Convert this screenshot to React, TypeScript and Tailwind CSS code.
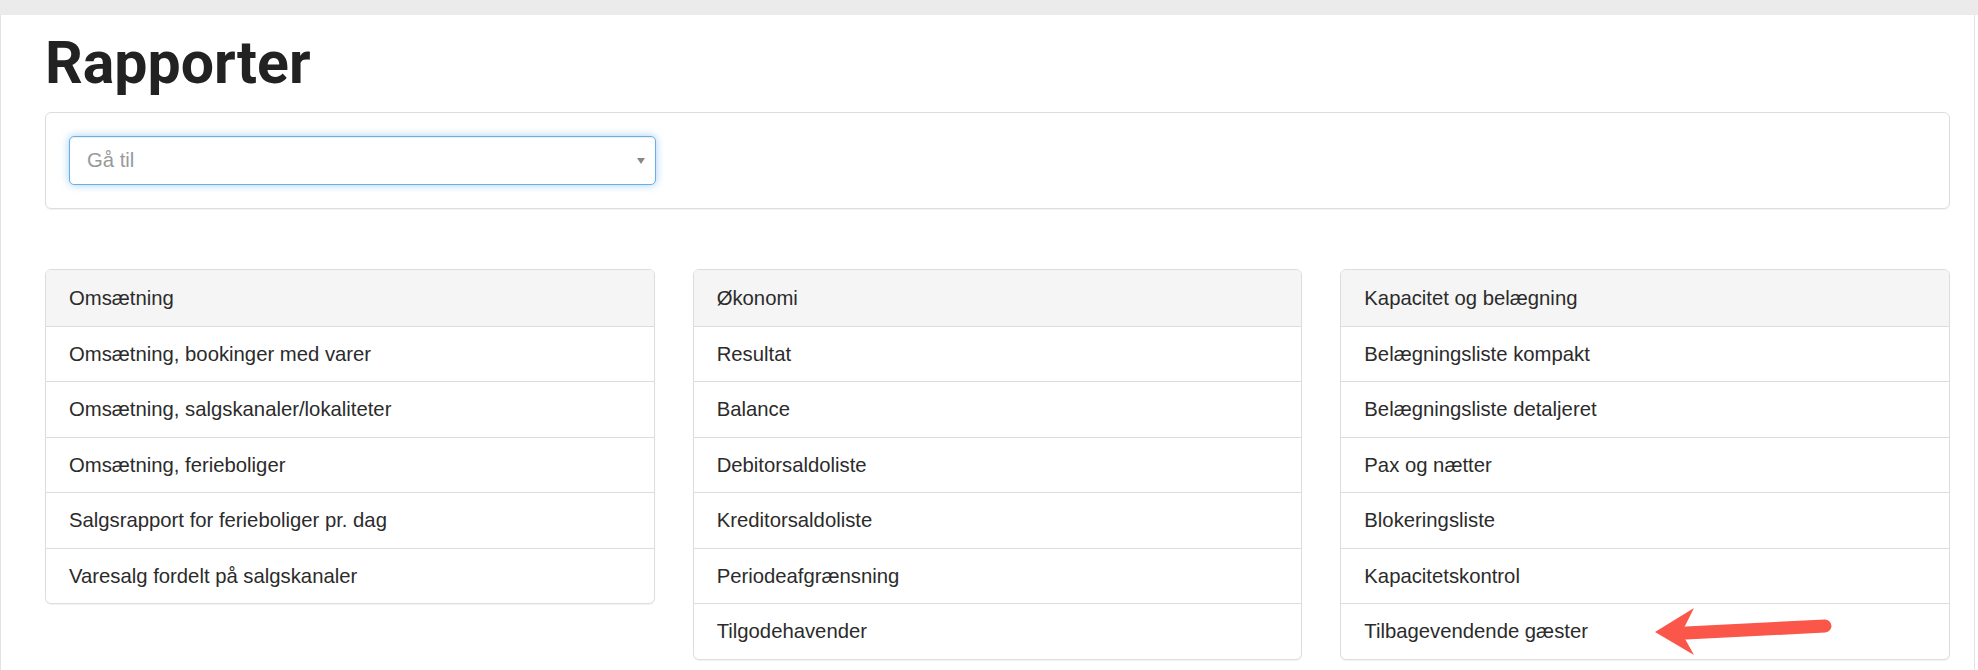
import { ReactNode } from 'react'

type Group = {
  title: string
  items: string[]
}

const groups: Group[] = [
  {
    title: 'Omsætning',
    items: [
      'Omsætning, bookinger med varer',
      'Omsætning, salgskanaler/lokaliteter',
      'Omsætning, ferieboliger',
      'Salgsrapport for ferieboliger pr. dag',
      'Varesalg fordelt på salgskanaler',
    ],
  },
  {
    title: 'Økonomi',
    items: [
      'Resultat',
      'Balance',
      'Debitorsaldoliste',
      'Kreditorsaldoliste',
      'Periodeafgrænsning',
      'Tilgodehavender',
    ],
  },
  {
    title: 'Kapacitet og belægning',
    items: [
      'Belægningsliste kompakt',
      'Belægningsliste detaljeret',
      'Pax og nætter',
      'Blokeringsliste',
      'Kapacitetskontrol',
      'Tilbagevendende gæster',
    ],
  },
]

function Panel({ children }: { children: ReactNode }) {
  return (
    <div className="overflow-hidden rounded-[6px] border border-[#ddd] bg-white shadow-[0_1px_1px_rgba(0,0,0,0.05)]">
      {children}
    </div>
  )
}

function ReportGroup({ group }: { group: Group }) {
  return (
    <Panel>
      <div className="flex h-[56px] items-center bg-[#f5f5f5] px-[23px]">{group.title}</div>
      {group.items.map((item) => (
        <a
          key={item}
          href="#"
          className="flex h-[55.5px] items-center border-t border-[#ddd] px-[23px] text-[#2b2b2b] hover:bg-[#f5f5f5]"
        >
          {item}
        </a>
      ))}
    </Panel>
  )
}

// red callout arrow pointing at the last report link
function CalloutArrow() {
  return (
    <svg
      className="pointer-events-none absolute left-[1640px] top-[595px]"
      width="200"
      height="70"
      viewBox="0 0 200 70"
    >
      <path d="M46 38 L185 31" stroke="#fa574a" strokeWidth="13" strokeLinecap="round" />
      <polygon points="54,13 15,37 54,60 44,42 44,33" fill="#fa574a" />
    </svg>
  )
}

export default function App() {
  return (
    <div className="relative min-h-[670px] bg-white font-['Liberation_Sans',Arial,sans-serif] text-[20.3px] text-[#2b2b2b]">
      <div className="h-[15px] bg-[#ebebeb]" />
      <div className="w-[1975px] border-x border-[#e3e3e3] pb-[11px] pl-[44px] pr-[24px]">
        <h1 className="pt-[16px] font-['Roboto',Arial,sans-serif] text-[59px] font-bold leading-[1.1] text-[#222]">
          Rapporter
        </h1>

        <div className="mt-[16px] rounded-[6px] border border-[#ddd] p-[23px] shadow-[0_1px_1px_rgba(0,0,0,0.05)]">
          <div className="relative flex h-[49px] w-[587px] items-center rounded-[5px] border border-[#66afe9] bg-white pl-[17px] text-[#999] shadow-[inset_0_1px_1px_rgba(0,0,0,0.075),0_0_8px_rgba(102,175,233,0.6)]">
            Gå til
            <span className="absolute right-[10px] top-[21px] h-0 w-0 border-x-[4px] border-t-[6px] border-x-transparent border-t-[#888]" />
          </div>
        </div>

        <div className="mt-[60px] grid grid-cols-3 items-start gap-x-[38px]">
          {groups.map((g) => (
            <ReportGroup key={g.title} group={g} />
          ))}
        </div>
      </div>
      <CalloutArrow />
    </div>
  )
}
